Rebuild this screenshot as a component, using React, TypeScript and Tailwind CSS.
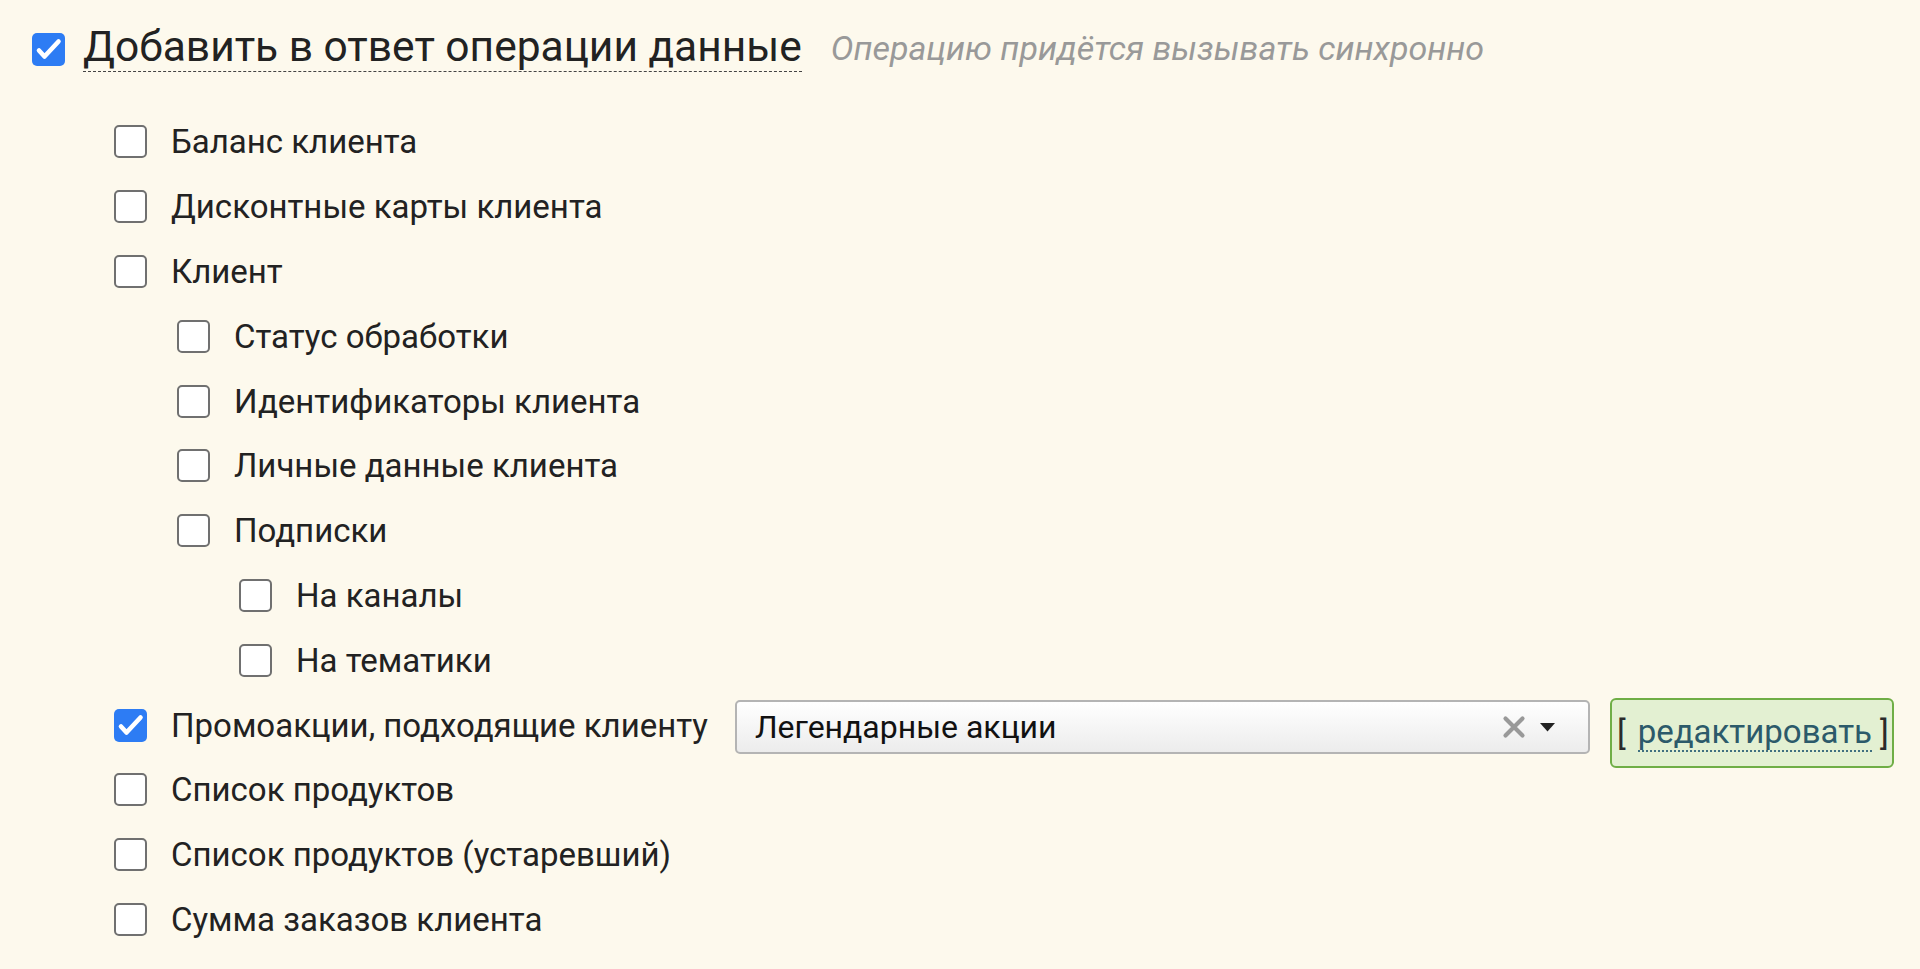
const FONT = "font-['Roboto','Noto_Sans',sans-serif]";

type Item = { label: string; level: number; checked?: boolean; promo?: boolean };

const ITEMS: Item[] = [
  { label: "Баланс клиента", level: 0 },
  { label: "Дисконтные карты клиента", level: 0 },
  { label: "Клиент", level: 0 },
  { label: "Статус обработки", level: 1 },
  { label: "Идентификаторы клиента", level: 1 },
  { label: "Личные данные клиента", level: 1 },
  { label: "Подписки", level: 1 },
  { label: "На каналы", level: 2 },
  { label: "На тематики", level: 2 },
  { label: "Промоакции, подходящие клиенту", level: 0, checked: true, promo: true },
  { label: "Список продуктов", level: 0 },
  { label: "Список продуктов (устаревший)", level: 0 },
  { label: "Сумма заказов клиента", level: 0 },
];

const INDENT: Record<number, string> = {
  0: "pl-[114px]",
  1: "pl-[177px]",
  2: "pl-[239px]",
};

function Checkbox({ checked }: { checked?: boolean }) {
  if (checked) {
    return (
      <span className="flex h-[33px] w-[33px] shrink-0 items-center justify-center rounded-[5px] bg-[#2d7cf4]">
        <svg width="33" height="33" viewBox="0 0 33 33" fill="none">
          <path d="M7 17.5l5.5 6L26.5 8.5" stroke="white" strokeWidth="4.6" strokeLinecap="round" strokeLinejoin="round" />
        </svg>
      </span>
    );
  }
  return <span className="h-[33px] w-[33px] shrink-0 rounded-[5px] border-2 border-[#707070] bg-white" />;
}

function PromoSelect() {
  return (
    <div className="ml-[27px] mt-[3px] flex h-[54px] w-[855px] shrink-0 items-center rounded-[5px] border-2 border-[#b4b4b4] bg-gradient-to-b from-white to-[#ececec] pl-[18px] pr-[32px]">
      <span className="flex-1 text-[32px] leading-none text-[#111]">Легендарные акции</span>
      <svg width="24" height="24" viewBox="0 0 24 24" className="mr-[13px]">
        <path d="M3.5 3.5l17 17M20.5 3.5l-17 17" stroke="#999" strokeWidth="4.2" strokeLinecap="round" />
      </svg>
      <svg width="17" height="10" viewBox="0 0 17 10">
        <path d="M1 1h15l-7.5 8.5z" fill="#222" />
      </svg>
    </div>
  );
}

function EditButton() {
  return (
    <div className="ml-[20px] mt-[16px] flex h-[70px] w-[284px] shrink-0 items-center rounded-[6px] border-2 border-[#6fae46] bg-[#e3f0d2] pl-[5px] text-[33px] leading-none">
      <span className="text-[#2b2b2b]">[</span>
      <span className="ml-[12px] border-b-2 border-dotted border-[#3f6f80] pb-[2px] text-[#2c5a6a]">редактировать</span>
      <span className="ml-[8px] text-[#2b2b2b]">]</span>
    </div>
  );
}

export default function App() {
  return (
    <div className={`min-h-[969px] bg-[#fdf9ed] pl-[32px] pt-[17px] text-[#222] ${FONT}`}>
      {/* Header */}
      <div className="flex h-[64px] items-center">
        <Checkbox checked />
        <span className="ml-[18px] border-b border-dashed border-[#444] pb-[3px] text-[42.5px] leading-none">
          Добавить в ответ операции данные
        </span>
        <span className="ml-[29px] mt-[-3px] text-[34px] italic leading-none text-[#999]">
          Операцию придётся вызывать синхронно
        </span>
      </div>

      {/* Items */}
      <div className="-ml-[32px] mt-[28.6px]">
        {ITEMS.map((item) => (
          <div key={item.label} className={`flex h-[64.8px] items-center ${INDENT[item.level]}`}>
            <Checkbox checked={item.checked} />
            <span className="ml-[24px] whitespace-nowrap text-[33px] leading-none">{item.label}</span>
            {item.promo && (
              <>
                <PromoSelect />
                <EditButton />
              </>
            )}
          </div>
        ))}
      </div>
    </div>
  );
}
